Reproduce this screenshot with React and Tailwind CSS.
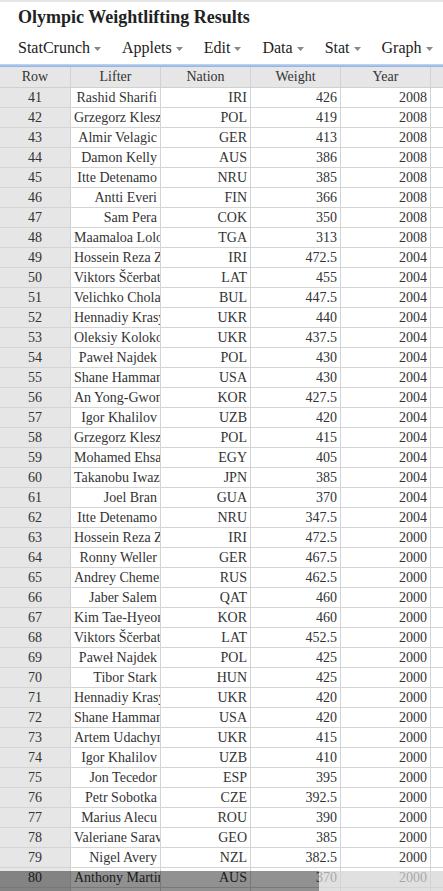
import React from "react";

const rows = [
  [41, "Rashid Sharifi", "IRI", "426", "2008"],
  [42, "Grzegorz Kleszcz", "POL", "419", "2008"],
  [43, "Almir Velagic", "GER", "413", "2008"],
  [44, "Damon Kelly", "AUS", "386", "2008"],
  [45, "Itte Detenamo", "NRU", "385", "2008"],
  [46, "Antti Everi", "FIN", "366", "2008"],
  [47, "Sam Pera", "COK", "350", "2008"],
  [48, "Maamaloa Lolohea", "TGA", "313", "2008"],
  [49, "Hossein Reza Zadeh", "IRI", "472.5", "2004"],
  [50, "Viktors Ščerbatihs", "LAT", "455", "2004"],
  [51, "Velichko Cholakov", "BUL", "447.5", "2004"],
  [52, "Hennadiy Krasylnikov", "UKR", "440", "2004"],
  [53, "Oleksiy Kolokoltsev", "UKR", "437.5", "2004"],
  [54, "Paweł Najdek", "POL", "430", "2004"],
  [55, "Shane Hamman", "USA", "430", "2004"],
  [56, "An Yong-Gwon", "KOR", "427.5", "2004"],
  [57, "Igor Khalilov", "UZB", "420", "2004"],
  [58, "Grzegorz Kleszcz", "POL", "415", "2004"],
  [59, "Mohamed Ehsan", "EGY", "405", "2004"],
  [60, "Takanobu Iwazaki", "JPN", "385", "2004"],
  [61, "Joel Bran", "GUA", "370", "2004"],
  [62, "Itte Detenamo", "NRU", "347.5", "2004"],
  [63, "Hossein Reza Zadeh", "IRI", "472.5", "2000"],
  [64, "Ronny Weller", "GER", "467.5", "2000"],
  [65, "Andrey Chemerkin", "RUS", "462.5", "2000"],
  [66, "Jaber Salem", "QAT", "460", "2000"],
  [67, "Kim Tae-Hyeon", "KOR", "460", "2000"],
  [68, "Viktors Ščerbatihs", "LAT", "452.5", "2000"],
  [69, "Paweł Najdek", "POL", "425", "2000"],
  [70, "Tibor Stark", "HUN", "425", "2000"],
  [71, "Hennadiy Krasylnikov", "UKR", "420", "2000"],
  [72, "Shane Hamman", "USA", "420", "2000"],
  [73, "Artem Udachyn", "UKR", "415", "2000"],
  [74, "Igor Khalilov", "UZB", "410", "2000"],
  [75, "Jon Tecedor", "ESP", "395", "2000"],
  [76, "Petr Sobotka", "CZE", "392.5", "2000"],
  [77, "Marius Alecu", "ROU", "390", "2000"],
  [78, "Valeriane Saravanchikov", "GEO", "385", "2000"],
  [79, "Nigel Avery", "NZL", "382.5", "2000"],
  [80, "Anthony Martin", "AUS", "370", "2000"],
  [81, "Giorgi Asanidze", "GEO", "365", "2000"],
];

const menus = ["StatCrunch", "Applets", "Edit", "Data", "Stat", "Graph"];

function Caret() {
  return (
    <svg width="7" height="4" viewBox="0 0 7 4" className="ml-[4px] mt-[1px]">
      <path d="M0 0 L7 0 L3.5 4 Z" fill="#888" />
    </svg>
  );
}

export default function App() {
  return (
    <div className="h-[891px] flex flex-col overflow-hidden bg-white border-t-2 border-[#e6e6e6] font-['Liberation_Serif',serif] text-[#333]">
      <h1 className="mt-[3px] pl-[18px] text-[18px] leading-[24px] font-bold text-[#222] whitespace-nowrap">
        Olympic Weightlifting Results
      </h1>
      <div className="mt-[9px] pl-[18px] flex items-center gap-[21px] text-[16px] leading-[20px] text-[#222] whitespace-nowrap">
        {menus.map((m) => (
          <div key={m} className="flex items-center shrink-0">
            <span>{m}</span>
            <Caret />
          </div>
        ))}
      </div>
      <div className="mt-[6px] h-[3px] shrink-0 bg-linear-to-b from-[#c6d8f3] to-[#8aaee4]" />
      <div className="relative flex-1 overflow-hidden text-[14px]">
        <div className="grid grid-cols-[71px_90px_90px_90px_90px_1fr] h-[21px] leading-[20px] bg-[#e6e6e6] border-b border-[#d0d0d0] text-center">
          <div className="border-r border-[#d2d2d2]">Row</div>
          <div className="border-r border-[#d2d2d2]">Lifter</div>
          <div className="border-r border-[#d2d2d2]">Nation</div>
          <div className="border-r border-[#d2d2d2]">Weight</div>
          <div className="border-r border-[#d2d2d2]">Year</div>
          <div></div>
        </div>
        {rows.map((r) => (
          <div
            key={r[0]}
            className="grid grid-cols-[71px_90px_90px_90px_90px_1fr] h-[20px] leading-[19px] border-b border-[#d4d4d4]"
          >
            <div className="bg-[#e6e6e6] border-r border-[#d2d2d2] text-center">{r[0]}</div>
            <div className="border-r border-[#d4d4d4] text-right px-[3px] overflow-hidden whitespace-nowrap">{r[1]}</div>
            <div className="border-r border-[#d4d4d4] text-right px-[3px] overflow-hidden whitespace-nowrap">{r[2]}</div>
            <div className="border-r border-[#d4d4d4] text-right px-[3px] overflow-hidden whitespace-nowrap">{r[3]}</div>
            <div className="border-r border-[#d4d4d4] text-right px-[3px] overflow-hidden whitespace-nowrap">{r[4]}</div>
            <div></div>
          </div>
        ))}
        <div className="absolute left-0 right-0 bottom-0 h-[20px] flex">
          <div className="w-[319px] bg-[rgba(0,0,0,0.43)]" />
          <div className="flex-1 bg-[rgba(212,212,212,0.72)]" />
        </div>
      </div>
    </div>
  );
}
